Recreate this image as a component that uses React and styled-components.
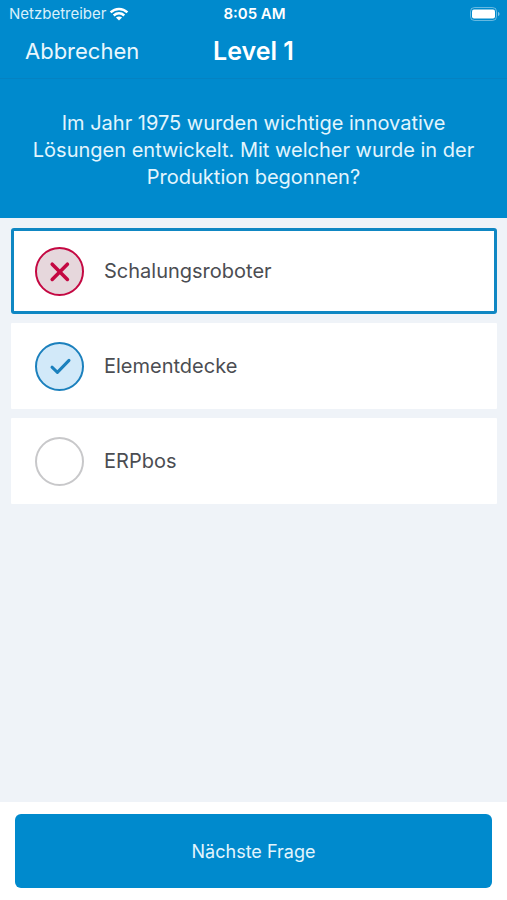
import React, { useState } from "react"
import styled, { createGlobalStyle } from "styled-components"


const answers = [
    { id: "roboter", text: "Schalungsroboter", result: "wrong" },
    { id: "decke", text: "Elementdecke", result: "right" },
    { id: "erp", text: "ERPbos", result: "none" },
]

const App = () => {
    const [selected, setSelected] = useState("roboter")

    return (
        <Page>
            <GlobalStyle />
            <Header>
                <StatusBar>
                    <Carrier>
                        Netzbetreiber
                        <Wifi />
                    </Carrier>
                    <Time>8:05 AM</Time>
                    <Battery />
                </StatusBar>
                <NavBar>
                    <Cancel type="button">Abbrechen</Cancel>
                    <Title>Level 1</Title>
                </NavBar>
            </Header>
            <Question id="question">
                Im Jahr 1975 wurden wichtige innovative Lösungen entwickelt. Mit welcher wurde in der Produktion begonnen?
            </Question>
            <Answers role="radiogroup" aria-labelledby="question">
                {answers.map((answer) => (
                    <Answer key={answer.id} htmlFor={answer.id} $active={selected === answer.id}>
                        <Marker>
                            <Radio
                                type="radio"
                                name="answer"
                                id={answer.id}
                                checked={selected === answer.id}
                                onChange={() => setSelected(answer.id)}
                                $result={answer.result}
                            />
                            {answer.result === "wrong" && <Cross />}
                            {answer.result === "right" && <Check />}
                        </Marker>
                        {answer.text}
                    </Answer>
                ))}
            </Answers>
            <Footer>
                <Next type="button">Nächste Frage</Next>
            </Footer>
        </Page>
    )
};

const Wifi = () => (
    <svg width="20" height="14" viewBox="0 0 20 14" fill="none" stroke="white" strokeWidth="2.5" aria-hidden="true">
        <path d="M1.6 5.4C6.4 .8 13.6 .8 18.4 5.4" />
        <path d="M4.7 8.5C7.9 5.6 12.1 5.6 15.3 8.5" />
        <path d="M10 13.6L6.9 10.6C8.7 9 11.3 9 13.1 10.6Z" fill="white" stroke="none" />
    </svg>
);

const Battery = () => (
    <svg width="30" height="14" viewBox="0 0 30 14" aria-hidden="true">
        <rect x=".5" y=".5" width="26" height="13" rx="4" fill="none" stroke="white" strokeOpacity=".4" />
        <rect x="2" y="2.5" width="23" height="9" rx="2" fill="white" />
        <path d="M28 5C30 5.6 30 8.4 28 9Z" fill="white" fillOpacity=".5" />
    </svg>
);

const Cross = () => (
    <svg width="49" height="49" viewBox="0 0 49 49" fill="none" stroke="#c40842" strokeWidth="3.6" strokeLinecap="round" aria-hidden="true">
        <path d="M17.2 17.2L32.4 32.4M32.4 17.2L17.2 32.4" />
    </svg>
);

const Check = () => (
    <svg width="49" height="49" viewBox="0 0 49 49" fill="none" stroke="#1b80bd" strokeWidth="3" strokeLinecap="round" strokeLinejoin="round" aria-hidden="true">
        <path d="M17 25.2L22.4 30.4L34 18.4" />
    </svg>
);

export default App;


const GlobalStyle = createGlobalStyle`
* {
box-sizing: border-box;
}
body {
margin: 0;
font-family: Inter, "Liberation Sans", sans-serif;
}
`;
const Page = styled.div`
min-height: 100vh;
background-color: #eff3f8;
display: flex;
flex-direction: column;
`;
const Header = styled.header`
background-color: #008acd;
color: white;
border-bottom: 1px solid #0582c2;
`;
const StatusBar = styled.div`
height: 27px;
padding: 0 7px 0 9px;
display: grid;
grid-template-columns: 1fr auto 1fr;
align-items: center;
font-size: 15px;

> svg {
justify-self: end;
}
`;
const Carrier = styled.div`
display: flex;
align-items: center;
gap: 3px;
color: #d9f0fb;
`;
const Time = styled.div`
font-weight: 600;
`;
const NavBar = styled.div`
height: 51px;
padding: 0 25px 4px;
display: grid;
grid-template-columns: 1fr auto 1fr;
align-items: center;
`;
const Cancel = styled.button`
justify-self: start;
padding: 0;
border: none;
background: none;
color: #e9f7fd;
font-family: inherit;
font-size: 22px;
cursor: pointer;
`;
const Title = styled.h1`
margin: 0;
font-size: 25px;
font-weight: 600;
`;
const Question = styled.p`
margin: 0;
padding: 31px 24px 27px;
background-color: #008acd;
color: #e2f5fd;
font-size: 20px;
line-height: 27px;
text-align: center;
`;
const Answers = styled.div`
flex: 1;
padding: 10px 10px 10px 11px;
display: flex;
flex-direction: column;
gap: 9px;
`;
const Answer = styled.label`
height: 86px;
padding: 0 21px;
border: 3px solid ${(props) => (props.$active ? "#0f87c3" : "white")};
border-radius: ${(props) => (props.$active ? "3px" : "1px")};
background-color: white;
color: #4b4d52;
display: flex;
align-items: center;
gap: 20px;
font-size: 20px;
cursor: pointer;
`;
const Marker = styled.span`
display: grid;

> * {
grid-area: 1 / 1;
}
> svg {
pointer-events: none;
}
`;
const rings = { wrong: "#c40842", right: "#1b80bd", none: "#c8c8ca" };
const fills = { wrong: "#e6d7dc", right: "#d2e9f9", none: "white" };
const Radio = styled.input`
appearance: none;
width: 49px;
height: 49px;
margin: 0;
border: 2px solid ${(props) => rings[props.$result]};
border-radius: 50%;
background-color: ${(props) => fills[props.$result]};
cursor: pointer;
`;
const Footer = styled.footer`
padding: 12px 15px;
background-color: white;
`;
const Next = styled.button`
width: 100%;
height: 74px;
border: none;
border-radius: 6px;
background-color: #008acd;
color: #e2f5fd;
font-family: inherit;
font-size: 18px;
cursor: pointer;
`;
